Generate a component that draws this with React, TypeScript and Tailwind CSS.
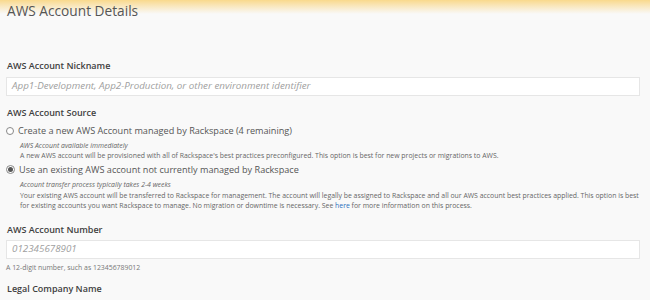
import React from 'react';

const Label = ({ children }: { children: React.ReactNode }) => (
  <div className="text-[9px] font-semibold text-[#3f3f3f] leading-[14px]">{children}</div>
);

export default function App() {
  return (
    <div
      className="w-[650px] h-[300px] overflow-hidden bg-[#f9f9f9] text-[#555]"
      style={{ fontFamily: '"Open Sans", "Liberation Sans", sans-serif' }}
    >
      <div className="h-[14px] bg-gradient-to-b from-[#f9d98c] to-[#f9f9f9]" />
      <div className="px-[6px] -mt-[13px]">
        <h1 className="text-[13.7px] font-normal text-[#555] leading-[20px] pl-[1px]">AWS Account Details</h1>

        <div className="mt-[38px] pl-[1px]">
          <Label>AWS Account Nickname</Label>
        </div>
        <div className="mt-[4px] w-[634px] h-[19px] bg-white border border-[#e6e6e6] flex items-center px-[5px] text-[9.8px] italic text-[#a0a0a0]">
          App1-Development, App2-Production, or other environment identifier
        </div>

        <div className="mt-[10px] pl-[1px]">
          <Label>AWS Account Source</Label>
        </div>
        <label className="mt-[4px] flex items-center gap-[4px] text-[9.15px] text-[#555] leading-[14px]">
          <span className="w-[8px] h-[8px] rounded-full border border-[#888] bg-white" />
          Create a new AWS Account managed by Rackspace (4 remaining)
        </label>
        <div className="pl-[14px] mt-[3px] text-[6.9px] leading-[10px] text-[#666]">
          <div className="italic">AWS Account available immediately</div>
          <div>A new AWS account will be provisioned with all of Rackspace's best practices preconfigured. This option is best for new projects or migrations to AWS.</div>
        </div>
        <label className="mt-[1px] flex items-center gap-[4px] text-[9.1px] text-[#555] leading-[15px]">
          <span className="w-[9px] h-[9px] rounded-full border border-[#888] bg-white flex items-center justify-center">
            <span className="w-[5px] h-[5px] rounded-full bg-[#555]" />
          </span>
          Use an existing AWS account not currently managed by Rackspace
        </label>
        <div className="pl-[14px] mt-[3px] text-[6.9px] leading-[10.5px] text-[#666]">
          <div className="italic">Account transfer process typically takes 2-4 weeks</div>
          <div>
            Your existing AWS account will be transferred to Rackspace for management. The account will legally be assigned to Rackspace and all our AWS account best practices applied. This option is best for existing accounts you want Rackspace to manage. No migration or downtime is necessary. See{' '}
            <span className="text-[#2a6ebb]">here</span> for more information on this process.
          </div>
        </div>

        <div className="mt-[11px] pl-[1px]">
          <Label>AWS Account Number</Label>
        </div>
        <div className="mt-[3px] w-[634px] h-[19px] bg-white border border-[#e6e6e6] flex items-center px-[5px] text-[9.8px] italic text-[#a0a0a0]">
          012345678901
        </div>
        <div className="mt-[4px] text-[6.9px] leading-[10px] text-[#777]">A 12-digit number, such as 123456789012</div>

        <div className="mt-[9px] pl-[1px]">
          <Label>Legal Company Name</Label>
        </div>
      </div>
    </div>
  );
}
